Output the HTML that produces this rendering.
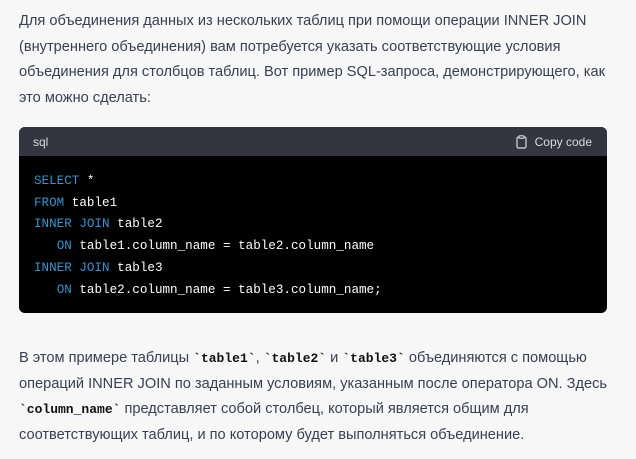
<!DOCTYPE html>
<html><head><meta charset="utf-8"><style>
body{margin:0;background:#f7f7f8;width:636px;height:459px;overflow:hidden;font-family:"Liberation Sans","DejaVu Sans",sans-serif;color:#374151;}
p{margin:0;position:absolute;left:19px;width:620px;font-size:14.6px;line-height:25.5px;letter-spacing:0;white-space:nowrap;}
.code{position:absolute;left:19px;top:127px;width:588px;height:186px;background:#000;border-radius:6px;overflow:hidden;}
.hdr{height:29px;background:#343541;color:#d9d9e3;font-size:12px;position:relative;}
.hdr .l{position:absolute;left:14px;top:8px;}
.hdr .r{position:absolute;right:15px;top:8px;}
pre{margin:0;position:absolute;left:15px;top:44px;font-family:"Liberation Mono","DejaVu Sans Mono",monospace;font-size:12.6px;line-height:21.7px;color:#fff;}
.k{color:#2e95d3}
code{font-family:"Liberation Mono",monospace;font-weight:bold;color:#111;font-size:13px;}
</style></head><body>
<p style="top:9px">Для объединения данных из нескольких таблиц при помощи операции INNER JOIN<br>(внутреннего объединения) вам потребуется указать соответствующие условия<br>объединения для столбцов таблиц. Вот пример SQL-запроса, демонстрирующего, как<br>это можно сделать:</p>
<div class="code"><div class="hdr"><span class="l">sql</span><span class="r"><svg width="11" height="14" viewBox="0 0 11 14" style="vertical-align:-3px;margin-right:8px"><rect x="1" y="2" width="9" height="11" rx="1.5" fill="none" stroke="#d9d9e3" stroke-width="1.2"/><rect x="3" y="0.8" width="5" height="2.5" rx="0.8" fill="#343541" stroke="#d9d9e3" stroke-width="1.1"/></svg>Copy code</span></div>
<pre><span class="k">SELECT</span> *
<span class="k">FROM</span> table1
<span class="k">INNER</span> <span class="k">JOIN</span> table2
   <span class="k">ON</span> table1.column_name = table2.column_name
<span class="k">INNER</span> <span class="k">JOIN</span> table3
   <span class="k">ON</span> table2.column_name = table3.column_name;</pre></div>
<p style="top:346px">В этом примере таблицы <code>`table1`</code>, <code>`table2`</code> и <code>`table3`</code> объединяются с помощью<br>операций INNER JOIN по заданным условиям, указанным после оператора ON. Здесь<br><code>`column_name`</code> представляет собой столбец, который является общим для<br>соответствующих таблиц, и по которому будет выполняться объединение.</p>
</body></html>
